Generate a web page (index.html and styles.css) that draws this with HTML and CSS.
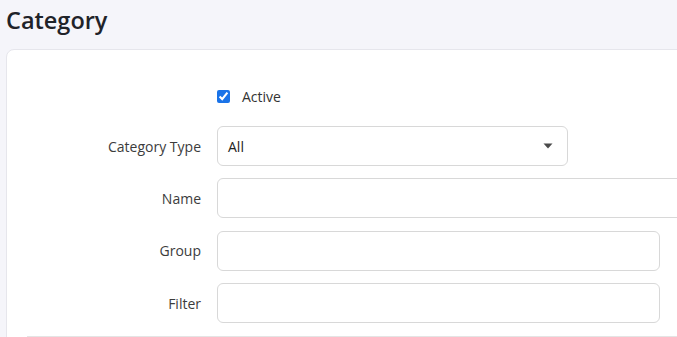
FILE: index.html
```html
<!DOCTYPE html>
<html>
<head>
<meta charset="utf-8">
<link rel="stylesheet" href="styles.css">
</head>
<body>
<h1 class="title">Category</h1>
<div class="card">
  <form class="form">
    <div class="check-row">
      <label class="check"><input type="checkbox" checked> <span>Active</span></label>
    </div>
    <div class="fields">
      <label class="lbl">Category Type</label>
      <div class="select">
        <span>All</span>
        <svg class="caret" width="10" height="6" viewBox="0 0 10 6"><path d="M0.5 0.5 H9.5 L5 5.5 Z" fill="#4a4a4a"/></svg>
      </div>
      <label class="lbl">Name</label>
      <input class="inp inp-wide" type="text">
      <label class="lbl">Group</label>
      <input class="inp inp-mid" type="text">
      <label class="lbl">Filter</label>
      <input class="inp inp-mid" type="text">
    </div>
    <div class="divider"></div>
  </form>
</div>
</body>
</html>
```
FILE: styles.css
```css
html, body {
  margin: 0;
  padding: 0;
  background: #f5f5fa;
  font-family: "Open Sans", "Noto Sans", sans-serif;
  overflow: hidden;
}
body {
  height: 100vh;
}
.title {
  margin: 0;
  padding: 4px 0 0 6px;
  height: 49px;
  box-sizing: border-box;
  font-size: 23.5px;
  font-weight: 600;
  color: #1f2329;
  line-height: 32px;
}
.card {
  margin-left: 6px;
  width: 720px;
  height: 400px;
  background: #fff;
  border: 1px solid #e6e6ec;
  border-radius: 8px;
  box-sizing: border-box;
  padding: 36px 0 0 20px;
}
.check-row {
  height: 20px;
  display: flex;
  align-items: center;
  padding-left: 190px;
  margin-bottom: 20px;
}
.check {
  display: flex;
  align-items: center;
  font-size: 14px;
  color: #333;
}
.check input {
  width: 13px;
  height: 13px;
  margin: 0 12px 0 0;
  accent-color: #1a73e8;
}
.fields {
  display: grid;
  grid-template-columns: 174px auto;
  column-gap: 16px;
  row-gap: 12.4px;
  align-items: center;
  justify-items: start;
}
.lbl {
  justify-self: end;
  font-size: 14px;
  color: #3c3c3c;
}
.select, .inp {
  height: 40px;
  box-sizing: border-box;
  border: 1px solid #d8d8d8;
  border-radius: 6px;
  background: #fff;
  font-family: inherit;
  font-size: 14px;
}
.select {
  width: 351px;
  display: flex;
  align-items: center;
  justify-content: space-between;
  padding: 0 14px 0 10px;
  color: #222;
}
.caret {
  display: block;
}
.inp-wide {
  width: 480px;
}
.inp-mid {
  width: 443px;
}
.divider {
  margin-top: 13px;
  height: 1px;
  background: #e4e4e4;
  width: 700px;
}
```
